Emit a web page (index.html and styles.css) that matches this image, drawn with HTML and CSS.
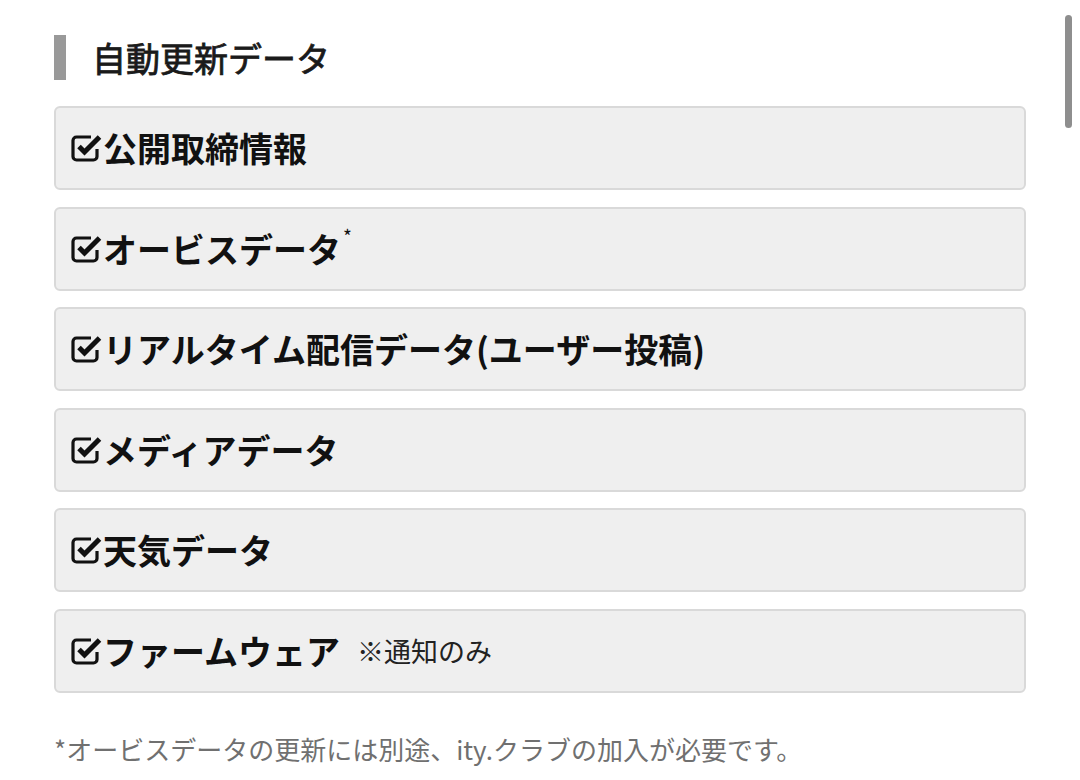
FILE: index.html
```html
<!DOCTYPE html>
<html lang="ja">
<head>
<meta charset="utf-8">
<title>自動更新データ</title>
<link rel="stylesheet" href="styles.css">
</head>
<body>
<main class="page">
  <h2 class="section-title">自動更新データ</h2>
  <ul class="items">
    <li class="item"><svg class="check" viewBox="0 0 31 28"><path class="box" d="M20 3H5.5a3.5 3.5 0 0 0-3.5 3.5v16a3.5 3.5 0 0 0 3.5 3.5h17a3.5 3.5 0 0 0 3.5-3.5V15"/><path class="tick" d="M8 12.5l5.5 5.5L28.5 3"/></svg><span class="label">公開取締情報</span></li>
    <li class="item"><svg class="check" viewBox="0 0 31 28"><path class="box" d="M20 3H5.5a3.5 3.5 0 0 0-3.5 3.5v16a3.5 3.5 0 0 0 3.5 3.5h17a3.5 3.5 0 0 0 3.5-3.5V15"/><path class="tick" d="M8 12.5l5.5 5.5L28.5 3"/></svg><span class="label">オービスデータ<sup class="mark">*</sup></span></li>
    <li class="item"><svg class="check" viewBox="0 0 31 28"><path class="box" d="M20 3H5.5a3.5 3.5 0 0 0-3.5 3.5v16a3.5 3.5 0 0 0 3.5 3.5h17a3.5 3.5 0 0 0 3.5-3.5V15"/><path class="tick" d="M8 12.5l5.5 5.5L28.5 3"/></svg><span class="label">リアルタイム配信データ(ユーザー投稿)</span></li>
    <li class="item"><svg class="check" viewBox="0 0 31 28"><path class="box" d="M20 3H5.5a3.5 3.5 0 0 0-3.5 3.5v16a3.5 3.5 0 0 0 3.5 3.5h17a3.5 3.5 0 0 0 3.5-3.5V15"/><path class="tick" d="M8 12.5l5.5 5.5L28.5 3"/></svg><span class="label">メディアデータ</span></li>
    <li class="item"><svg class="check" viewBox="0 0 31 28"><path class="box" d="M20 3H5.5a3.5 3.5 0 0 0-3.5 3.5v16a3.5 3.5 0 0 0 3.5 3.5h17a3.5 3.5 0 0 0 3.5-3.5V15"/><path class="tick" d="M8 12.5l5.5 5.5L28.5 3"/></svg><span class="label">天気データ</span></li>
    <li class="item"><svg class="check" viewBox="0 0 31 28"><path class="box" d="M20 3H5.5a3.5 3.5 0 0 0-3.5 3.5v16a3.5 3.5 0 0 0 3.5 3.5h17a3.5 3.5 0 0 0 3.5-3.5V15"/><path class="tick" d="M8 12.5l5.5 5.5L28.5 3"/></svg><span class="label">ファームウェア</span><span class="note">※通知のみ</span></li>
  </ul>
  <p class="footnote">*オービスデータの更新には別途、ity.クラブの加入が必要です。</p>
</main>
<div class="scroll-thumb"></div>
</body>
</html>
```

FILE: styles.css
```css
html, body {
  margin: 0;
  padding: 0;
  background: #ffffff;
}

body {
  font-family: "Noto Sans CJK JP", "Noto Sans", sans-serif;
  color: #111111;
  width: 1080px;
  height: 780px;
  overflow: hidden;
  position: relative;
}

.page {
  padding: 35px 54px 0 54px;
}

.section-title {
  margin: 0;
  border-left: 12px solid #999999;
  padding-left: 26px;
  font-size: 34px;
  line-height: 45px;
  height: 45px;
  font-weight: 400;
  -webkit-text-stroke: 0.8px #1a1a1a;
  color: #1a1a1a;
}

.items {
  list-style: none;
  margin: 26px 0 0 0;
  padding: 0;
  display: flex;
  flex-direction: column;
  gap: 16.6px;
}

.item {
  box-sizing: border-box;
  height: 84px;
  background: #efefef;
  border: 2px solid #d9d9d9;
  border-radius: 6px;
  display: flex;
  align-items: center;
  padding-left: 15px;
}

.check {
  width: 31px;
  height: 28px;
  flex: none;
  margin-right: 1px;
}

.check .box {
  fill: none;
  stroke: #111111;
  stroke-width: 3.2;
}

.check .tick {
  fill: none;
  stroke: #111111;
  stroke-width: 5;
  stroke-linejoin: miter;
}

.label {
  font-size: 34px;
  font-weight: 700;
  line-height: 1;
  color: #111111;
}

.mark {
  font-size: 19px;
  font-weight: 400;
  vertical-align: top;
  position: relative;
  top: -6px;
  margin-left: 2px;
}

.note {
  font-size: 27px;
  font-weight: 400;
  color: #222222;
  margin-left: 17px;
  line-height: 1;
}

.footnote {
  margin: 36px 0 0 0;
  font-size: 26px;
  line-height: 39px;
  color: #707070;
  font-weight: 400;
}

.scroll-thumb {
  position: absolute;
  top: 15px;
  left: 1065px;
  width: 7px;
  height: 113px;
  border-radius: 4px;
  background: #8e8e8e;
}
```
